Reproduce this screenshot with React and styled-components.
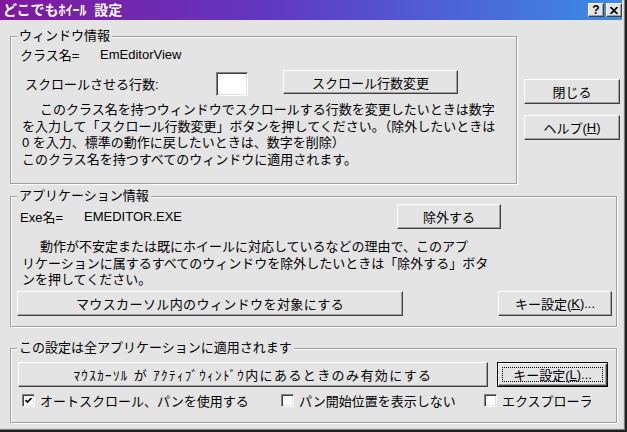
import React from "react";
import styled, { createGlobalStyle, css } from "styled-components";

const GlobalStyle = createGlobalStyle`
  html, body {
    margin: 0;
    padding: 0;
    background: #e4e4e4;
  }
  body {
    font-family: "Liberation Sans", "Noto Sans CJK JP", sans-serif;
    font-size: 13px;
    color: #000;
  }
`;

const Window = styled.div`
  box-sizing: border-box;
  width: 627px;
  height: 432px;
  background: #e4e4e4;
  border-right: 2px solid #202020;
  border-bottom: 2px solid #202020;
  box-shadow: inset -1px -1px 0 #808080, inset -2px -2px 0 #d8d8d8;
  padding-right: 3px;
  padding-bottom: 2px;
  overflow: hidden;
`;

const TitleBar = styled.div`
  height: 20px;
  display: flex;
  align-items: center;
  padding: 0 0 0 3px;
  background: linear-gradient(to right, #80189e 0%, #5f3ac2 45%, #3a8ce8 100%);
`;

const TitleText = styled.span`
  flex: 1;
  color: #fff;
  font-weight: bold;
  font-size: 14px;
  line-height: 20px;
  white-space: pre;
`;

const TitleButtons = styled.div`
  display: flex;
  gap: 2px;
`;

const TitleButton = styled.span`
  box-sizing: border-box;
  width: 16px;
  height: 14px;
  display: flex;
  align-items: center;
  justify-content: center;
  background: #e4e4e4;
  border: 1px solid;
  border-color: #fff #404040 #404040 #fff;
  box-shadow: inset -1px -1px 0 #a0a0a0;
  font-weight: bold;
  font-size: 12px;
  line-height: 12px;
`;

const Body = styled.div`
  padding: 16px 0 0 10px;
`;

const TopRow = styled.div`
  display: flex;
  align-items: flex-start;
`;

const Group = styled.div`
  position: relative;
  box-sizing: border-box;
  width: ${(p) => p.$w}px;
  height: ${(p) => p.$h}px;
  margin-top: ${(p) => p.$mt || 0}px;
  border: 1px solid #a0a0a0;
  box-shadow: inset 1px 1px 0 #fff, 1px 1px 0 #fff;
  padding: ${(p) => p.$pad || "0"};
`;

const Legend = styled.span`
  position: absolute;
  top: -9px;
  left: 6px;
  padding: 0 2px;
  background: #e4e4e4;
  line-height: 16px;
  white-space: nowrap;
`;

const SideColumn = styled.div`
  display: flex;
  flex-direction: column;
  gap: 11px;
  margin: 43px 0 0 7px;
`;

const Row = styled.div`
  display: flex;
  align-items: center;
  height: ${(p) => p.$h || 16}px;
  margin-top: ${(p) => p.$mt || 0}px;
  margin-left: ${(p) => p.$ml || 0}px;
  white-space: nowrap;
`;

const Label = styled.span`
  width: ${(p) => (p.$w ? `${p.$w}px` : "auto")};
  flex: none;
`;

const TextInput = styled.span`
  box-sizing: border-box;
  width: 32px;
  height: 24px;
  margin-top: 2px;
  background: #fff;
  border: 1px solid;
  border-color: #808080 #fff #fff #808080;
  box-shadow: inset 1px 1px 0 #404040, inset -1px -1px 0 #e4e4e4;
`;

const Paragraph = styled.p`
  margin: ${(p) => p.$mt || 0}px 0 0 ${(p) => p.$ml || 0}px;
  line-height: 16.5px;
  white-space: nowrap;
`;

const Indent = styled.span`
  display: inline-block;
  width: 18px;
`;

const Button = styled.button`
  box-sizing: border-box;
  flex: none;
  width: ${(p) => p.$w}px;
  height: ${(p) => p.$h || 25}px;
  margin-left: ${(p) => p.$ml || 0}px;
  padding: 0;
  display: flex;
  align-items: center;
  justify-content: center;
  background: #e4e4e4;
  font: inherit;
  letter-spacing: ${(p) => p.$ls || 0}px;
  color: #000;
  border: 1px solid;
  border-color: #fff #404040 #404040 #fff;
  box-shadow: inset -1px -1px 0 #a0a0a0;
  white-space: nowrap;
  ${(p) =>
    p.$default &&
    css`
      border: 1px solid #000;
      box-shadow: inset 1px 1px 0 #fff, inset -1px -1px 0 #404040,
        inset -2px -2px 0 #a0a0a0;
    `}
`;

const FocusRing = styled.span`
  box-sizing: border-box;
  position: absolute;
  inset: 4px;
  border: 1px dotted #000;
`;

const ButtonWrap = styled.span`
  position: relative;
  display: flex;
  width: 100%;
  height: 100%;
  align-items: center;
  justify-content: center;
`;

const ButtonRow = styled.div`
  display: flex;
  align-items: center;
  margin-top: ${(p) => p.$mt || 0}px;
  margin-left: ${(p) => p.$ml || 0}px;
`;

const CheckRow = styled.div`
  display: flex;
  align-items: center;
  margin: 4px 0 0 4px;
`;

const Check = styled.label`
  display: flex;
  align-items: center;
  gap: 5px;
  width: ${(p) => (p.$w ? `${p.$w}px` : "auto")};
  white-space: nowrap;
`;

const Box = styled.span`
  box-sizing: border-box;
  width: 13px;
  height: 13px;
  display: inline-flex;
  align-items: center;
  justify-content: center;
  background: #fff;
  border: 1px solid;
  border-color: #808080 #fff #fff #808080;
  box-shadow: inset 1px 1px 0 #404040, inset -1px -1px 0 #e4e4e4;
`;

const CheckBox = ({ checked, label, w }) => (
  <Check $w={w}>
    <Box>
      {checked && (
        <svg width="7" height="7" viewBox="0 0 7 7">
          <path d="M0.5 3 L2.5 5 L6.5 1" fill="none" stroke="#000" strokeWidth="1.6" />
        </svg>
      )}
    </Box>
    {label}
  </Check>
);

export default function App() {
  return (
    <>
      <GlobalStyle />
      <Window>
        <TitleBar>
          <TitleText>どこでもﾎｲｰﾙ  設定</TitleText>
          <TitleButtons>
            <TitleButton>?</TitleButton>
            <TitleButton>
              <svg width="8" height="7" viewBox="0 0 8 7">
                <path d="M0.5 0 L7.5 7 M7.5 0 L0.5 7" stroke="#000" strokeWidth="1.6" />
              </svg>
            </TitleButton>
          </TitleButtons>
        </TitleBar>
        <Body>
          <TopRow>
            <Group $w={507} $h={148} $pad="9px 0 0 9px">
              <Legend>ウィンドウ情報</Legend>
              <Row>
                <Label $w={80}>クラス名=</Label>
                <span>EmEditorView</span>
              </Row>
              <Row $h={26} $mt={8} $ml={5}>
                <Label $w={191}>スクロールさせる行数:</Label>
                <TextInput />
                <Button $w={175} $h={24} $ml={35} style={{ alignSelf: "flex-start" }}>
                  スクロール行数変更
                </Button>
              </Row>
              <Paragraph $mt={6} $ml={2}>
                <Indent />
                このクラス名を持つウィンドウでスクロールする行数を変更したいときは数字
                <br />
                を入力して「スクロール行数変更」ボタンを押してください。（除外したいときは
                <br />
                0 を入力、標準の動作に戻したいときは、数字を削除）
                <br />
                このクラス名を持つすべてのウィンドウに適用されます。
              </Paragraph>
            </Group>
            <SideColumn>
              <Button $w={96}>閉じる</Button>
              <Button $w={96}>
                ヘルプ(<u>H</u>)
              </Button>
            </SideColumn>
          </TopRow>

          <Group $w={607} $h={131} $mt={12} $pad="7px 0 0 9px">
            <Legend>アプリケーション情報</Legend>
            <Row $h={25}>
              <Label $w={64}>Exe名=</Label>
              <Label $w={313}>EMEDITOR.EXE</Label>
              <Button $w={104}>除外する</Button>
            </Row>
            <Paragraph $mt={10} $ml={2}>
              <Indent />
              動作が不安定または既にホイールに対応しているなどの理由で、このアプ
              <br />
              リケーションに属するすべてのウィンドウを除外したいときは「除外する」ボタ
              <br />
              ンを押してください。
            </Paragraph>
            <ButtonRow $mt={2} $ml={-3}>
              <Button $w={386} $ls={0.4}>
                マウスカーソル内のウィンドウを対象にする
              </Button>
              <Button $w={114} $ml={95}>
                キー設定(<u>K</u>)...
              </Button>
            </ButtonRow>
          </Group>

          <Group $w={607} $h={75} $mt={21} $pad="13px 0 0 7px">
            <Legend>この設定は全アプリケーションに適用されます</Legend>
            <ButtonRow>
              <Button $w={470} $ls={1.4}>
                ﾏｳｽｶｰｿﾙ が ｱｸﾃｨﾌﾞｳｨﾝﾄﾞｳ内にあるときのみ有効にする
              </Button>
              <Button $w={111} $ml={9} $default>
                <ButtonWrap>
                  <FocusRing />
                  キー設定(<u>L</u>)...
                </ButtonWrap>
              </Button>
            </ButtonRow>
            <CheckRow>
              <CheckBox checked w={259} label="オートスクロール、パンを使用する" />
              <CheckBox w={203} label="パン開始位置を表示しない" />
              <CheckBox label="エクスプローラ" />
            </CheckRow>
          </Group>
        </Body>
      </Window>
    </>
  );
}
